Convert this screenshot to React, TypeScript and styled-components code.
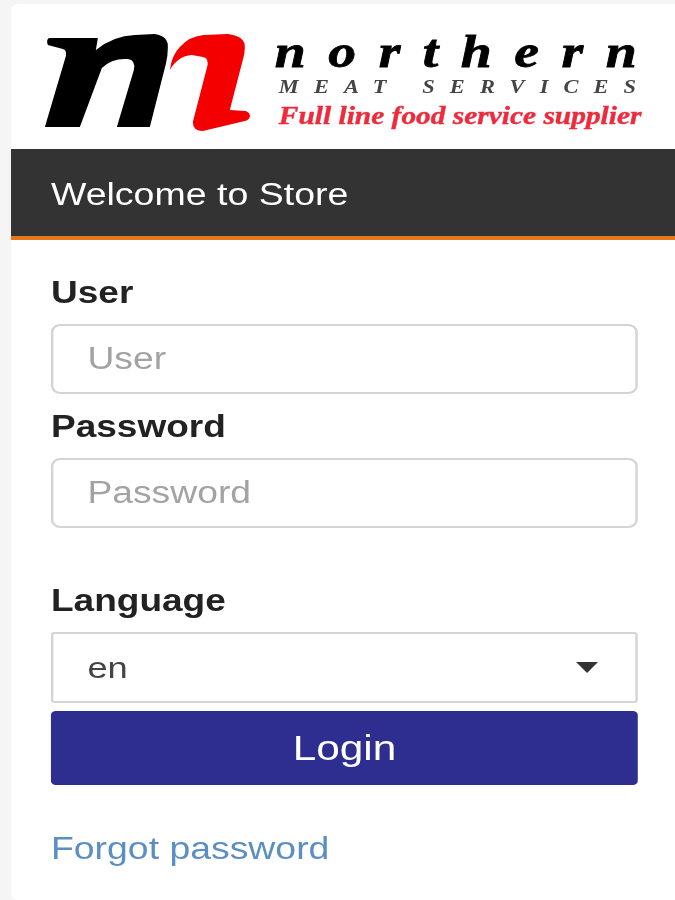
import styled, { createGlobalStyle } from 'styled-components';

const GlobalStyle = createGlobalStyle`
  html, body {
    margin: 0;
    padding: 0;
    background: #f5f5f5;
    font-family: "Liberation Sans", Arial, sans-serif;
  }
`;

const Page = styled.div`
  box-sizing: border-box;
  height: 900px;
  padding: 4px 0 0 11px;
  overflow: hidden;
`;

// the whole card is a narrow mobile page shown stretched sideways
const Card = styled.div`
  width: 548.8px;
  height: 896px;
  background: #fff;
  border-radius: 6px 0 0 6px;
  transform: scaleX(1.21);
  transform-origin: left top;
  filter: blur(0.45px);
`;

const LogoRow = styled.div`
  display: flex;
  align-items: flex-start;
  height: 145px;
  box-sizing: border-box;
  padding: 30px 0 0 28.1px;
`;

const LogoMark = styled.svg`
  flex: none;
  width: 170.2px;
  height: 98px;
`;

const LogoText = styled.div`
  display: flex;
  flex-direction: column;
  margin-left: 19.8px;
  font-family: "Liberation Serif", "Times New Roman", serif;
  font-style: italic;
  font-weight: bold;
  white-space: nowrap;
`;

const Brand = styled.div`
  margin-top: -2px;
  margin-bottom: 3px;
  font-size: 46px;
  line-height: 39px;
  letter-spacing: 18.6px;
  color: #000;
  -webkit-text-stroke: 0.8px #000;
`;

const Tag = styled.div`
  margin: 5px 0 0 3.3px;
  font-size: 18.5px;
  line-height: 16px;
  letter-spacing: 12.5px;
  color: #444;
`;

const Slogan = styled.div`
  margin: 9px 0 0 3.3px;
  font-size: 24.3px;
  line-height: 24px;
  color: #ee2b3c;
  -webkit-text-stroke: 0.4px #ee2b3c;
`;

const Header = styled.div`
  box-sizing: border-box;
  height: 91px;
  padding: 28px 33px 0;
  background: #333;
  border-bottom: 4px solid #e8771a;
  color: #fff;
  font-size: 31px;
  line-height: 36px;
`;

const Form = styled.div`
  display: flex;
  flex-direction: column;
  padding: 34px 0 0 33.06px;
`;

const Label = styled.label<{ $gap?: number }>`
  display: block;
  height: 50px;
  color: #222;
  font-size: 30.6px;
  font-weight: bold;
  line-height: 36px;
  margin-top: ${p => p.$gap ?? 0}px;
`;

const Input = styled.input`
  box-sizing: border-box;
  display: block;
  width: 485.1px;
  height: 70px;
  padding: 0 28.1px;
  border: 2px solid #d4d4d4;
  border-radius: 8px;
  background: #fff;
  font: 30.8px "Liberation Sans", Arial, sans-serif;
  color: #555;
  outline: none;

  &::placeholder {
    color: #a3a3a3;
    opacity: 1;
  }
`;

const Select = styled.div`
  box-sizing: border-box;
  display: flex;
  align-items: center;
  justify-content: space-between;
  width: 485.1px;
  height: 71px;
  padding: 0 31.4px 0 28.1px;
  border: 2px solid #d4d4d4;
  border-radius: 3px;
  color: #444;
  font-size: 30px;
`;

const Caret = styled.svg`
  width: 18.2px;
  height: 11px;
`;

const LoginButton = styled.button`
  display: block;
  width: 485.1px;
  height: 74px;
  margin-top: 8px;
  border: none;
  border-radius: 4px;
  background: #2e2e90;
  color: #fff;
  font: 35px "Liberation Sans", Arial, sans-serif;
`;

const ForgotLink = styled.a`
  display: block;
  margin-top: 46px;
  color: #5b8fc4;
  font-size: 30.9px;
  line-height: 36px;
  text-decoration: none;
`;

export default function App() {
  return (
    <>
      <GlobalStyle />
      <Page>
        <Card>
          <LogoRow>
            <LogoMark viewBox="45 34 206 98" preserveAspectRatio="none" aria-hidden="true">
              <path
                fill="#000"
                d="M49 38 L98 38 L96 50 Q113 36 135 35 L155 34 Q169 36 168 48 Q168 56 166 64 L150 127 L117 127 L134 70 Q136 60 128 59 Q112 58 102 68 L80 127 L45 127 L66 56 Q67 50 63 49 L48 45 Q46 40 49 38 Z"
              />
              <path
                fill="#f40000"
                d="M170 70 Q172 55 180 47 Q190 36 204 35 L228 34 Q246 36 245 48 Q245 54 243 60 L230 110 L246 111 Q251 113 250 117 Q249 120 245 121 L203 131 Q193 131 193 122 L207 68 Q210 58 203 57 L192 55 Q178 56 170 70 Z"
              />
            </LogoMark>
            <LogoText>
              <Brand>northern</Brand>
              <Tag>MEAT SERVICES</Tag>
              <Slogan>Full line food service supplier</Slogan>
            </LogoText>
          </LogoRow>
          <Header>Welcome to Store</Header>
          <Form>
            <Label htmlFor="user">User</Label>
            <Input id="user" placeholder="User" />
            <Label htmlFor="password" $gap={14}>Password</Label>
            <Input id="password" type="password" placeholder="Password" />
            <Label $gap={54}>Language</Label>
            <Select>
              en
              <Caret viewBox="0 0 22 11" preserveAspectRatio="none" aria-hidden="true">
                <path fill="#333" d="M0 0 H22 L11 11 Z" />
              </Caret>
            </Select>
            <LoginButton>Login</LoginButton>
            <ForgotLink href="#">Forgot password</ForgotLink>
          </Form>
        </Card>
      </Page>
    </>
  );
}
